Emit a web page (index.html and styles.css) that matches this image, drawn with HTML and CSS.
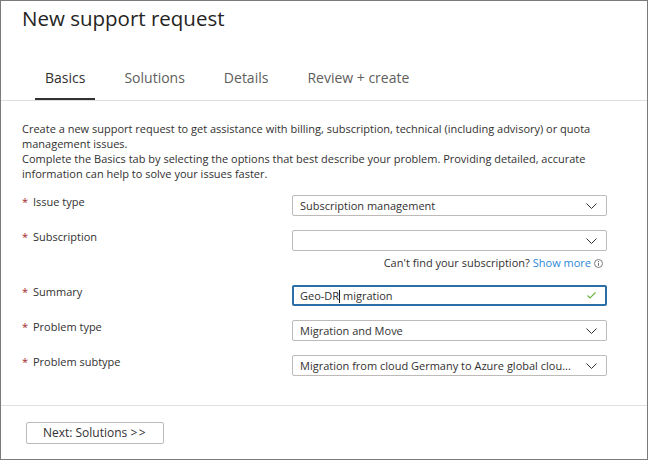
FILE: index.html
```html
<!DOCTYPE html>
<html lang="en">
<head>
<meta charset="utf-8">
<title>New support request</title>
<link rel="stylesheet" href="styles.css">
</head>
<body>
<div class="frame">
  <header class="head">
    <h1 class="title">New support request</h1>
  </header>
  <nav class="tabs">
    <span class="tab active">Basics</span>
    <span class="tab">Solutions</span>
    <span class="tab">Details</span>
    <span class="tab">Review + create</span>
  </nav>
  <main class="content">
    <p class="intro">Create a new support request to get assistance with billing, subscription, technical (including advisory) or quota<br>management issues.</p>
    <p class="intro">Complete the Basics tab by selecting the options that best describe your problem. Providing detailed, accurate<br>information can help to solve your issues faster.</p>
    <div class="form">
      <div class="row">
        <div class="label"><span class="req">*</span>Issue type</div>
        <div class="control">
          <div class="select"><span class="value">Subscription management</span><svg class="chev" width="11" height="6" viewBox="0 0 11 6"><polyline points="0.5,0.5 5.5,5.5 10.5,0.5" fill="none" stroke="#323130" stroke-width="1"/></svg></div>
        </div>
      </div>
      <div class="row">
        <div class="label"><span class="req">*</span>Subscription</div>
        <div class="control">
          <div class="select"><span class="value"></span><svg class="chev" width="11" height="6" viewBox="0 0 11 6"><polyline points="0.5,0.5 5.5,5.5 10.5,0.5" fill="none" stroke="#323130" stroke-width="1"/></svg></div>
          <div class="helper">Can't find your subscription? <span class="link">Show more</span><svg class="info" width="9" height="9" viewBox="0 0 9 9"><circle cx="4.5" cy="4.5" r="4" fill="none" stroke="#605e5c" stroke-width="0.8"/><line x1="4.5" y1="3.8" x2="4.5" y2="6.8" stroke="#605e5c" stroke-width="0.9"/><circle cx="4.5" cy="2.5" r="0.55" fill="#605e5c"/></svg></div>
        </div>
      </div>
      <div class="row">
        <div class="label"><span class="req">*</span>Summary</div>
        <div class="control">
          <div class="input focused"><span class="value">Geo-DR<span class="caret"></span> migration</span><svg class="check" width="9" height="7" viewBox="0 0 9 7"><polyline points="0.5,3.5 3,6 8.5,0.5" fill="none" stroke="#6bb33a" stroke-width="1.1"/></svg></div>
        </div>
      </div>
      <div class="row">
        <div class="label"><span class="req">*</span>Problem type</div>
        <div class="control">
          <div class="select"><span class="value">Migration and Move</span><svg class="chev" width="11" height="6" viewBox="0 0 11 6"><polyline points="0.5,0.5 5.5,5.5 10.5,0.5" fill="none" stroke="#323130" stroke-width="1"/></svg></div>
        </div>
      </div>
      <div class="row">
        <div class="label"><span class="req">*</span>Problem subtype</div>
        <div class="control">
          <div class="select"><span class="value">Migration from cloud Germany to Azure global clou...</span><svg class="chev" width="11" height="6" viewBox="0 0 11 6"><polyline points="0.5,0.5 5.5,5.5 10.5,0.5" fill="none" stroke="#323130" stroke-width="1"/></svg></div>
        </div>
      </div>
    </div>
  </main>
  <footer class="foot">
    <button class="btn" type="button">Next: Solutions <span class="arrows">&gt;&gt;</span></button>
  </footer>
</div>
</body>
</html>
```
FILE: styles.css
```css
* { box-sizing: border-box; }
html, body { margin: 0; padding: 0; background: #ffffff; }
body {
  font-family: "Open Sans", "Noto Sans", sans-serif;
  color: #323130;
}
.frame {
  width: 648px;
  height: 460px;
  border: 1px solid #7a7a7a;
  display: flex;
  flex-direction: column;
  background: #fff;
}
.head { padding: 3px 21px 0; }
.title {
  margin: 0;
  font-size: 20.5px;
  font-weight: 400;
  line-height: 28px;
  color: #252423;
}
.tabs {
  display: flex;
  gap: 19px;
  padding: 35px 0 0 34px;
  border-bottom: 1px solid #e1dfdd;
}
.tab {
  font-size: 14px;
  line-height: 21px;
  padding: 0 10px 10px;
  border-bottom: 2px solid transparent;
  color: #605e5c;
}
.tab.active {
  color: #323130;
  border-bottom-color: #323130;
}
.content {
  flex: 1;
  padding: 20px 21px 0;
}
.intro {
  margin: 0;
  font-size: 11px;
  line-height: 15px;
  color: #323130;
  white-space: nowrap;
}
.form {
  display: flex;
  flex-direction: column;
  gap: 14px;
  margin-top: 14px;
}
.row {
  display: flex;
  align-items: flex-start;
}
.label {
  width: 270px;
  font-size: 11px;
  line-height: 14px;
  color: #323130;
  display: flex;
  gap: 5px;
}
.req { color: #a4262c; width: 6px; }
.control {
  width: 315px;
  display: flex;
  flex-direction: column;
}
.select, .input {
  height: 21px;
  border: 1px solid #bdbab7;
  border-radius: 2px;
  display: flex;
  align-items: center;
  justify-content: space-between;
  padding: 0 9px 0 7px;
  font-size: 11px;
  color: #323130;
}
.input.focused {
  border: 2px solid #2b6fa8;
  padding: 0 9px 0 6px;
}
.value { white-space: nowrap; }
.caret {
  display: inline-block;
  width: 0;
  height: 13px;
  border-left: 1px solid #1b1a19;
  vertical-align: -3px;
}
.chev { flex: none; }
.check { flex: none; }
.helper {
  margin-top: 4px;
  font-size: 11px;
  line-height: 16px;
  color: #323130;
  display: flex;
  justify-content: flex-end;
  align-items: center;
  gap: 3px;
  padding-right: 4px;
}
.link { color: #2b88d8; }
.info { flex: none; }
.foot {
  border-top: 1px solid #e1dfdd;
  padding: 16px 0 0 25px;
  height: 54px;
}
.btn {
  display: block;
  height: 22px;
  width: 138px;
  border: 1px solid #bdbab7;
  border-radius: 2px;
  background: #fff;
  font-family: "Open Sans", "Noto Sans", sans-serif;
  font-size: 12px;
  color: #323130;
  padding: 0;
  line-height: 20px;
}
.arrows { letter-spacing: 1.5px; }
```
